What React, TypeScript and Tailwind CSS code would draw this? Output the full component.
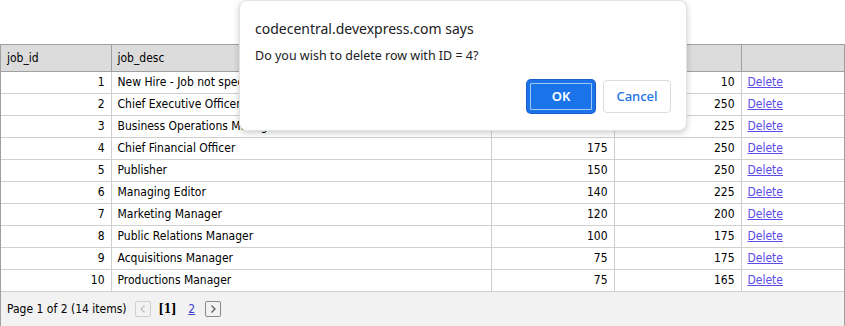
import React from 'react';

const rows = [
  { id: 1, desc: 'New Hire - Job not specified', min: 10, max: 10 },
  { id: 2, desc: 'Chief Executive Officer', min: 200, max: 250 },
  { id: 3, desc: 'Business Operations Manager', min: 175, max: 225 },
  { id: 4, desc: 'Chief Financial Officer', min: 175, max: 250 },
  { id: 5, desc: 'Publisher', min: 150, max: 250 },
  { id: 6, desc: 'Managing Editor', min: 140, max: 225 },
  { id: 7, desc: 'Marketing Manager', min: 120, max: 200 },
  { id: 8, desc: 'Public Relations Manager', min: 100, max: 175 },
  { id: 9, desc: 'Acquisitions Manager', min: 75, max: 175 },
  { id: 10, desc: 'Productions Manager', min: 75, max: 165 },
];

const App: React.FC = () => {
  return (
    <div
      className="relative w-[845px] h-[326px] bg-white overflow-hidden text-[12px] text-black"
      style={{ fontFamily: '"DejaVu Sans Condensed", "DejaVu Sans", sans-serif' }}
    >
      {/* Grid */}
      <div className="pt-[44px]">
        <div className="border border-[#a0a0a0] w-[845px]">
          <table className="w-full border-collapse table-fixed">
            <colgroup>
              <col className="w-[110px]" />
              <col className="w-[380px]" />
              <col className="w-[123px]" />
              <col className="w-[127px]" />
              <col />
            </colgroup>
            <thead className="bg-[#dcdcdc]">
              <tr className="h-[26px] border-b border-[#a0a0a0]">
                <th className="px-[6px] text-left font-normal border-r border-[#a0a0a0]">job_id</th>
                <th className="px-[6px] text-left font-normal border-r border-[#a0a0a0]">job_desc</th>
                <th className="px-[6px] text-left font-normal border-r border-[#a0a0a0]">min_lvl</th>
                <th className="px-[6px] text-left font-normal border-r border-[#a0a0a0]">max_lvl</th>
                <th className="px-[6px]"></th>
              </tr>
            </thead>
            <tbody>
              {rows.map((r) => (
                <tr key={r.id} className="h-[22px] border-b border-[#cfcfcf]">
                  <td className="px-[6px] text-right border-r border-[#cfcfcf]">{r.id}</td>
                  <td className="px-[6px] whitespace-nowrap overflow-hidden border-r border-[#cfcfcf]">{r.desc}</td>
                  <td className="px-[6px] text-right border-r border-[#cfcfcf]">{r.min}</td>
                  <td className="px-[6px] text-right border-r border-[#cfcfcf]">{r.max}</td>
                  <td className="px-[6px]">
                    <a href="#" className="text-[#5a4ce8] underline">Delete</a>
                  </td>
                </tr>
              ))}
            </tbody>
          </table>
          {/* Pager */}
          <div className="h-[34px] bg-[#f2f2f2] flex items-center px-[6px] gap-[6px]">
            <span>Page 1 of 2 (14 items)</span>
            <span className="ml-[2px] w-[16px] h-[16px] border border-[#d0d0d0] rounded-[2px] flex items-center justify-center">
              <svg width="8" height="10" viewBox="0 0 8 10" fill="none" stroke="#c0c0c0" strokeWidth="1.2">
                <path d="M5.5 1.5 L2 5 L5.5 8.5" />
              </svg>
            </span>
            <span className="font-bold ml-[2px]" style={{ fontFamily: '"DejaVu Serif Condensed", "DejaVu Serif", serif' }}>[1]</span>
            <a href="#" className="ml-[6px] text-[#3b3bd0] underline">2</a>
            <span className="ml-[4px] w-[16px] h-[16px] border border-[#8a8a8a] rounded-[2px] flex items-center justify-center">
              <svg width="8" height="10" viewBox="0 0 8 10" fill="none" stroke="#555" strokeWidth="1.2">
                <path d="M2.5 1.5 L6 5 L2.5 8.5" />
              </svg>
            </span>
          </div>
        </div>
      </div>

      {/* Confirm dialog */}
      <div
        className="absolute left-[239px] top-[0px] w-[448px] h-[131px] bg-white rounded-[8px] border border-[#e2e2e2] shadow-[0_2px_6px_rgba(0,0,0,0.2)] px-[15px]"
        style={{ fontFamily: '"Noto Sans", "Open Sans", sans-serif' }}
      >
        <div className="pt-[17px] text-[14px] text-[#202124] leading-[22px]">codecentral.devexpress.com says</div>
        <div className="mt-[7px] text-[12.5px] text-[#202124] leading-[18px]">Do you wish to delete row with ID = 4?</div>
        <div className="mt-[15px] flex justify-end gap-[8px]">
          <button className="w-[68px] h-[33px] rounded-[4px] bg-[#1a73e8] text-white text-[13px] font-semibold border-[2px] border-[#1a73e8] outline outline-1 outline-offset-[-4px] outline-white/60 ring-1 ring-[#1a5fc8]">
            OK
          </button>
          <button className="w-[68px] h-[33px] rounded-[4px] bg-white text-[#1a73e8] text-[13px] font-medium border border-[#dadce0]">
            Cancel
          </button>
        </div>
      </div>
    </div>
  );
};

export default App;
